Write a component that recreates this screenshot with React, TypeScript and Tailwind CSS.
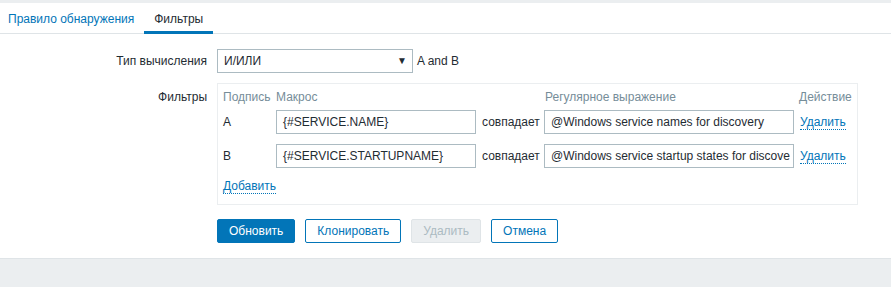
import React from "react";

const font = { fontFamily: '"Liberation Sans", Arial, sans-serif' };

function Link({ children }: { children: React.ReactNode }) {
  return (
    <span className="text-[#0275b8] border-b border-dotted border-[#0275b8] leading-[14px] cursor-pointer">
      {children}
    </span>
  );
}

function Input({ value, w }: { value: string; w: string }) {
  return (
    <div
      className={`${w} h-[24px] border border-[#acbbc2] bg-white pl-[6px] pr-[3px] flex items-center overflow-hidden whitespace-nowrap text-[#1f2c33]`}
    >
      {value}
    </div>
  );
}

export default function App() {
  const rows = [
    { label: "A", macro: "{#SERVICE.NAME}", regex: "@Windows service names for discovery" },
    { label: "B", macro: "{#SERVICE.STARTUPNAME}", regex: "@Windows service startup states for discove" },
  ];
  return (
    <div className="w-[891px] h-[287px] flex flex-col bg-white text-[12px] text-[#1f2c33]" style={font}>
      <div className="h-[3px] bg-[#ebeef0]" />
      <div className="h-[31px] flex border-b border-[#dfe4e7] bg-white">
        <div className="pl-[8px] pr-[10px] flex items-center text-[#0275b8] pt-[1px]">Правило обнаружения</div>
        <div className="px-[10px] flex items-center border-b-[3px] border-[#0275b8] -mb-[1px] pt-[4px] text-[#1f2c33]">
          Фильтры
        </div>
      </div>

      <div className="pt-[15px] pb-[15px] grid grid-cols-[207px_auto] gap-x-[10px] gap-y-[10px] items-start">
        <div className="text-right h-[24px] leading-[24px]">Тип вычисления</div>
        <div className="flex items-center h-[24px]">
          <div className="w-[196px] h-[24px] border border-[#acbbc2] flex items-center justify-between pl-[6px] pr-[5px]">
            <span>И/ИЛИ</span>
            <span className="text-[10px] leading-none">▼</span>
          </div>
          <span className="ml-[4px]">A and B</span>
        </div>

        <div className="text-right pt-[4px] leading-[20px]">Фильтры</div>
        <div className="w-[641px] border border-[#ebeef0] pl-[5px] pt-[3px] pb-[8px]">
          <div className="grid grid-cols-[53px_200px_68px_250px_auto] items-center">
            <div className="h-[20px] leading-[20px] text-[#768d99]">Подпись</div>
            <div className="h-[20px] leading-[20px] text-[#768d99]">Макрос</div>
            <div />
            <div className="h-[20px] leading-[20px] text-[#768d99] pl-[1px]">Регулярное выражение</div>
            <div className="h-[20px] leading-[20px] text-[#768d99] pl-[5px]">Действие</div>
            {rows.map((r, i) => (
              <React.Fragment key={r.label}>
                <div className={`${i === 0 ? "mt-[3px]" : "mt-[10px]"} h-[24px] leading-[24px]`}>{r.label}</div>
                <div className={i === 0 ? "mt-[3px]" : "mt-[10px]"}>
                  <Input value={r.macro} w="w-[200px]" />
                </div>
                <div className={`${i === 0 ? "mt-[3px]" : "mt-[10px]"} h-[24px] leading-[24px] pl-[6px]`}>совпадает</div>
                <div className={i === 0 ? "mt-[3px]" : "mt-[10px]"}>
                  <Input value={r.regex} w="w-[250px]" />
                </div>
                <div className={`${i === 0 ? "mt-[3px]" : "mt-[10px]"} h-[24px] flex items-center pl-[6px]`}>
                  <Link>Удалить</Link>
                </div>
              </React.Fragment>
            ))}
          </div>
          <div className="mt-[8px] h-[20px] flex items-center">
            <Link>Добавить</Link>
          </div>
        </div>

        <div />
        <div className="flex gap-[10px] mt-[4px]">
          <div className="h-[24px] px-[11px] flex items-center bg-[#0275b8] border border-[#0275b8] text-white rounded-[2px]">
            Обновить
          </div>
          <div className="h-[24px] px-[11px] flex items-center bg-white border border-[#0275b8] text-[#0275b8] rounded-[2px]">
            Клонировать
          </div>
          <div className="h-[24px] px-[11px] flex items-center bg-[#ebeef0] border border-[#dfe4e7] text-[#acbbc2] rounded-[2px]">
            Удалить
          </div>
          <div className="h-[24px] px-[11px] flex items-center bg-white border border-[#0275b8] text-[#0275b8] rounded-[2px]">
            Отмена
          </div>
        </div>
      </div>

      <div className="flex-1 bg-[#ebeef0] border-t border-[#dfe4e7]" />
    </div>
  );
}
